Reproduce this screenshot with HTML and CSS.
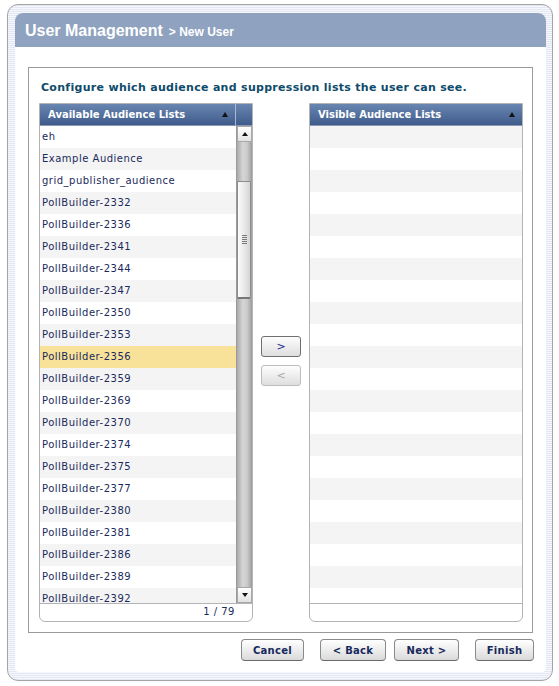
FILE: index.html
```html
<!DOCTYPE html>
<html>
<head>
<meta charset="utf-8">
<link rel="stylesheet" href="styles.css">
</head>
<body>
<div class="frame">
  <div class="inner">
    <div class="header">
      <span class="title">User Management</span>
      <span class="crumb">&gt; New User</span>
    </div>
    <div class="panel">
      <p class="intro">Configure which audience and suppression lists the user can see.</p>
      <div class="lists">
        <div class="listbox">
          <div class="lhead">
            <div class="lhead-title"><span>Available Audience Lists</span><span class="tri"></span></div>
            <div class="lhead-sb"></div>
          </div>
          <div class="lbody">
            <ul class="rows">
              <li>eh</li>
              <li>Example Audience</li>
              <li>grid_publisher_audience</li>
              <li>PollBuilder-2332</li>
              <li>PollBuilder-2336</li>
              <li>PollBuilder-2341</li>
              <li>PollBuilder-2344</li>
              <li>PollBuilder-2347</li>
              <li>PollBuilder-2350</li>
              <li>PollBuilder-2353</li>
              <li class="sel">PollBuilder-2356</li>
              <li>PollBuilder-2359</li>
              <li>PollBuilder-2369</li>
              <li>PollBuilder-2370</li>
              <li>PollBuilder-2374</li>
              <li>PollBuilder-2375</li>
              <li>PollBuilder-2377</li>
              <li>PollBuilder-2380</li>
              <li>PollBuilder-2381</li>
              <li>PollBuilder-2386</li>
              <li>PollBuilder-2389</li>
              <li>PollBuilder-2392</li>
            </ul>
            <div class="sb">
              <div class="sb-btn"><span class="tri-up"></span></div>
              <div class="sb-track">
                <div class="sb-thumb"><span class="grip"></span></div>
              </div>
              <div class="sb-btn"><span class="tri-down"></span></div>
            </div>
          </div>
          <div class="lfoot">1 / 79</div>
        </div>
        <div class="mover">
          <button class="mbtn">&gt;</button>
          <button class="mbtn" disabled>&lt;</button>
        </div>
        <div class="listbox">
          <div class="lhead">
            <div class="lhead-title full"><span>Visible Audience Lists</span><span class="tri"></span></div>
          </div>
          <div class="lbody striped"></div>
          <div class="lfoot"></div>
        </div>
      </div>
    </div>
    <div class="actions">
      <button class="btn w-cancel">Cancel</button>
      <button class="btn w-back">&lt; Back</button>
      <button class="btn w-next">Next &gt;</button>
      <button class="btn w-finish">Finish</button>
    </div>
  </div>
</div>
</body>
</html>
```
FILE: styles.css
```css
* { box-sizing: border-box; }
html, body { margin: 0; padding: 0; background: #ffffff; }
body { font-family: "DejaVu Sans", Verdana, sans-serif; }

.frame {
  margin: 4px 0 0 7px;
  width: 546px;
  height: 677px;
  border: 1px solid #a4a4a4;
  border-radius: 11px;
  padding: 8px 6px 8px 7px;
  background: repeating-linear-gradient(to bottom, #e3e6f3 0 1px, #f7f8fd 1px 2px);
}
.inner {
  background: #ffffff;
  height: 100%;
  border-radius: 8px 8px 4px 4px;
  display: flex;
  flex-direction: column;
}
.header {
  height: 34px;
  background: #8fa3c0;
  border-radius: 8px 8px 0 0;
  display: flex;
  align-items: baseline;
  padding: 8px 0 0 10px;
  gap: 6px;
}
.title {
  font-family: "Liberation Sans", Arial, sans-serif;
  font-weight: bold;
  font-size: 16px;
  color: #ffffff;
  line-height: 20px;
}
.crumb {
  font-family: "Liberation Sans", Arial, sans-serif;
  font-weight: bold;
  font-size: 12px;
  color: #ffffff;
}
.panel {
  margin: 20px 13px 0 13px;
  height: 566px;
  border: 1px solid #9a9a9a;
  padding: 0 9px 0 10px;
}
.intro {
  margin: 13px 0 8px 2px;
  font-size: 11px;
  line-height: 14px;
  font-weight: bold;
  color: #0f4b6b;
  letter-spacing: 0.3px;
  white-space: nowrap;
}
.lists {
  display: flex;
  justify-content: space-between;
  align-items: stretch;
}
.listbox {
  width: 214px;
  height: 519px;
  border: 1px solid #b4b4b4;
  border-radius: 0 0 6px 6px;
  display: flex;
  flex-direction: column;
  overflow: hidden;
}
.lhead {
  height: 22px;
  display: flex;
  background: linear-gradient(to bottom, #6986b1, #3e5b8b);
  border-bottom: 1px solid #8a9ab4;
}
.lhead-title {
  width: 196px;
  display: flex;
  align-items: center;
  justify-content: space-between;
  padding: 0 7px 0 8px;
  font-size: 10px;
  font-weight: bold;
  color: #ffffff;
  letter-spacing: 0;
  border-right: 1px solid #a9b8cf;
}
.lhead-title.full { width: 100%; border-right: 0; padding-right: 7px; }
.lhead-sb { flex: 1; }
.tri {
  width: 0; height: 0;
  border-left: 3.5px solid transparent;
  border-right: 3.5px solid transparent;
  border-bottom: 5px solid #111111;
}
.lbody {
  height: 478px;
  display: flex;
  overflow: hidden;
}
.lbody.striped {
  background: repeating-linear-gradient(to bottom, #f4f4f4 0 22px, #ffffff 22px 44px);
  background-size: 100% 462px;
  background-repeat: no-repeat;
}
.rows {
  list-style: none;
  margin: 0;
  padding: 0;
  width: 196px;
  height: 478px;
  overflow: hidden;
}
.rows li {
  height: 22px;
  line-height: 22px;
  padding-left: 2px;
  font-size: 10px;
  color: #1a2a5c;
  letter-spacing: 0.5px;
  white-space: nowrap;
}
.rows li:nth-child(even) { background: #f4f4f4; }
.rows li.sel { background: #f8e199; }
.sb {
  width: 16px;
  border-left: 1px solid #9a9a9a;
  display: flex;
  flex-direction: column;
  background: linear-gradient(to right, #a9a9a9, #d6d6d6 40%, #c8c8c8 70%, #9c9c9c);
}
.sb-btn {
  height: 16px;
  width: 15px;
  background: linear-gradient(to bottom, #ffffff, #e2e2e2);
  border: 1px solid #a8a8a8;
  display: flex;
  align-items: center;
  justify-content: center;
}
.tri-up {
  width: 0; height: 0;
  border-left: 3px solid transparent;
  border-right: 3px solid transparent;
  border-bottom: 4px solid #111111;
}
.tri-down {
  width: 0; height: 0;
  border-left: 3px solid transparent;
  border-right: 3px solid transparent;
  border-top: 4px solid #111111;
}
.sb-track {
  flex: 1;
}
.sb-thumb {
  margin: 39px 0 0 0;
  width: 14px;
  height: 118px;
  background: linear-gradient(to right, #fbfbfb, #e6e6e6 60%, #d4d4d4);
  border: 1px solid #8e8e8e;
  border-bottom: 2px solid #777777;
  border-radius: 0 0 2px 0;
  display: flex;
  align-items: center;
  justify-content: center;
}
.grip {
  width: 5px;
  height: 9px;
  background: repeating-linear-gradient(to bottom, #7a7a7a 0 1px, transparent 1px 2px);
}
.lfoot {
  height: 18px;
  border-top: 1px solid #b4b4b4;
  text-align: right;
  padding-right: 17px;
  font-size: 10px;
  line-height: 16px;
  color: #1a2a5c;
  letter-spacing: 0.5px;
}
.mover {
  display: flex;
  flex-direction: column;
  justify-content: center;
  gap: 8px;
  padding-bottom: 4px;
}
.mbtn {
  width: 40px;
  height: 21px;
  border: 1px solid #6f6f6f;
  border-radius: 3px;
  background: linear-gradient(to bottom, #fdfdfd, #dedede);
  font-family: "DejaVu Sans", Verdana, sans-serif;
  font-size: 11px;
  color: #1a2a8a;
  padding: 0;
}
.mbtn:disabled {
  border-color: #bdbdbd;
  color: #a8a8a8;
}
.actions {
  display: flex;
  justify-content: flex-end;
  margin: 6px 12px 0 0;
}
.btn {
  height: 22px;
  border: 1px solid #8a8a8a;
  border-bottom-color: #6a6a6a;
  border-radius: 4px;
  background: linear-gradient(to bottom, #ffffff, #dadada);
  font-family: "DejaVu Sans", Verdana, sans-serif;
  font-size: 10px;
  font-weight: bold;
  color: #17295c;
  padding: 0;
  letter-spacing: 0.3px;
}
.w-cancel { width: 63px; margin-right: 16px; }
.w-back { width: 66px; margin-right: 8px; }
.w-next { width: 65px; margin-right: 16px; }
.w-finish { width: 59px; }
```
